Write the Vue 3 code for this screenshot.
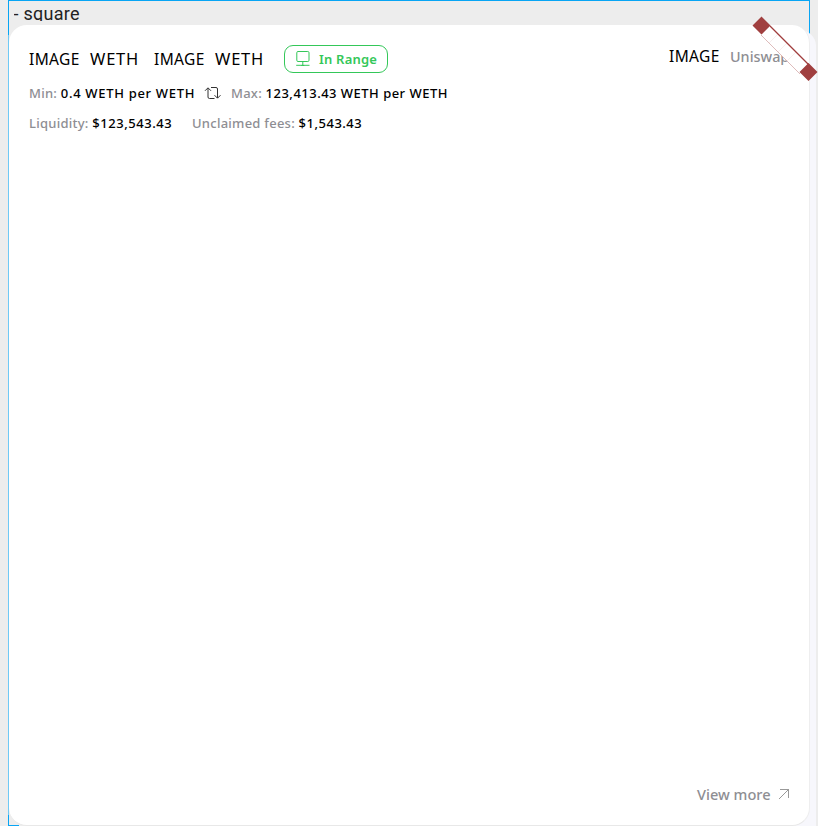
<script setup>
const tokens = ['WETH', 'WETH']
const ranges = [
  { label: 'Min:', value: '0.4 WETH per WETH', key: 'min' },
  { label: 'Max:', value: '123,413.43 WETH per WETH', key: 'max' },
]
</script>

<template>
  <main class="canvas">
    <section class="frame">
      <header class="frame-title"><span>- square</span></header>
      <div class="shade"></div>
      <article class="card">
        <div class="top">
          <div class="pair">
            <div v-for="(t, i) in tokens" :key="i" class="token">
              <span class="image">IMAGE</span><span class="symbol">{{ t }}</span>
            </div>
            <div class="badge">
              <svg width="16" height="18" viewBox="0 0 16 18" fill="none" stroke="currentColor">
                <rect x="1.8" y="1.5" width="12.2" height="10" rx="1.2" />
                <path d="M7.8 11.5v4.5M1.2 15.3h13.3M6.3 15.5h3" />
              </svg>
              <span>In Range</span>
            </div>
          </div>
          <div class="protocol"><span class="image">IMAGE</span><span class="name">Uniswap</span></div>
        </div>
        <div class="range">
          <template v-for="(r, i) in ranges" :key="r.key">
            <svg v-if="i" class="swap" width="17" height="14" viewBox="0 0 17 14" fill="none" stroke="#333">
              <path d="M4 2v9q0 1.5 1.5 1.5h5M1 4.8l3-3 3 3M7 1.5h5q1.5 0 1.5 1.5v9M10.5 9.2l3 3 3-3" />
            </svg>
            <p :class="r.key"><span>{{ r.label }}</span> <b>{{ r.value }}</b></p>
          </template>
        </div>
        <div class="stats">
          <p class="liquidity"><span>Liquidity:</span> <b>$123,543.43</b></p>
          <p class="fees"><span>Unclaimed fees:</span> <b>$1,543.43</b></p>
        </div>
        <footer>
          <span>View more</span>
          <svg width="12" height="12" viewBox="0 0 12 12" fill="none" stroke="#999">
            <path d="M1 11L11 1M2 1.5h8.5v8.5" />
          </svg>
        </footer>
      </article>
      <i class="edge left"></i><i class="edge corner"></i>
      <svg class="ribbon" width="66" height="66" viewBox="0 0 66 66">
        <path d="M18 10L57 49L48 58L9 19Z" fill="#fff" />
        <path d="M26 18L17 27M35 27L26 36M44 36L35 45" stroke="#f3e8e8" stroke-width=".7" />
        <path d="M9 19L48 58" stroke="#d6aaaa" stroke-width=".8" />
        <path d="M18 10L57 49" stroke="#a03c3c" stroke-width="1.3" />
        <path d="M9.5 .5L18.5 9.5L9.5 18.5L.5 9.5ZM56.5 47L65.5 56L56.5 65L47.5 56Z" fill="#a03f3f" />
      </svg>
    </section>
  </main>
</template>

<style>
body { background: #ededed; overflow: hidden; }
</style>

<style scoped>
* { box-sizing: border-box; }
.canvas { width: 818px; height: 826px; padding-left: 8px; background: #ededed; overflow: hidden; font-family: "Noto Sans", sans-serif; color: #000; }
.frame { position: relative; width: 802px; height: 826px; border: 1px solid #08a5f4; border-bottom: 0; }
.frame-title { height: 24px; padding-left: 4.6px; font: 18px/26px Roboto, sans-serif; letter-spacing: .25px; color: #222; overflow: hidden; }
.frame-title span { display: block; height: 20px; overflow: hidden; }
.shade { position: absolute; left: 780px; top: 29px; width: 27px; height: 797px; border-radius: 0 16px 0 0; background: #f7f7fc; }
.card { position: relative; display: flex; flex-direction: column; width: 801px; height: 801px; padding: 20px 19px 20px 20px; background: #fff; border-radius: 18px; border-right: 1px solid #eeeeef; border-bottom: 1px solid #e8e8e8; }
.top { display: flex; justify-content: space-between; height: 28px; margin-right: 1px; }
.pair, .token, .badge, .protocol, .range, .stats, footer { display: flex; align-items: center; }
.token { gap: 10px; margin-right: 15px; font-size: 16px; line-height: 28px; }
.token .symbol { width: 49px; }
.image { width: 51px; font-size: 15.5px; font-weight: 450; letter-spacing: .4px; }
.symbol { font-size: 16.5px; font-weight: 450; letter-spacing: .8px; }
.badge { width: 104px; height: 28px; margin-left: 5px; padding-left: 10px; gap: 8px; border: 1px solid #34c759; border-radius: 9px; color: #34c759; font-size: 13px; font-weight: 600; letter-spacing: .2px; }
span, p { white-space: nowrap; }
p { margin: 0; font-size: 13px; line-height: 20px; color: #8e8e93; font-weight: 500; letter-spacing: .25px; }
b { font-weight: 500; color: #000; }
.protocol { height: 22px; gap: 10px; }
.protocol .name { width: 59px; color: #8e8e93; font-size: 14.4px; font-weight: 500; letter-spacing: 0; }
.range { height: 20px; margin-top: 10px; }
.min { width: 175px; }
.min b { letter-spacing: .69px; }
.max b { letter-spacing: .48px; }
.swap { margin-right: 10px; }
.stats { height: 20px; margin-top: 10px; }
.liquidity { width: 163px; }
.liquidity b { letter-spacing: .55px; }
.fees b { letter-spacing: .5px; }
footer { margin-top: auto; height: 22px; justify-content: flex-end; gap: 7px; color: #8e8e93; font-size: 14.6px; font-weight: 500; }
footer span { width: 74px; }
.edge { position: absolute; }
.left { left: -1px; top: 34px; width: 1px; height: 780px; background: #6fc9f5; }
.corner { left: -1px; top: 824px; width: 11px; height: 1px; background: #08a5f4; }
.ribbon { position: absolute; left: 743px; top: 15px; }
</style>
